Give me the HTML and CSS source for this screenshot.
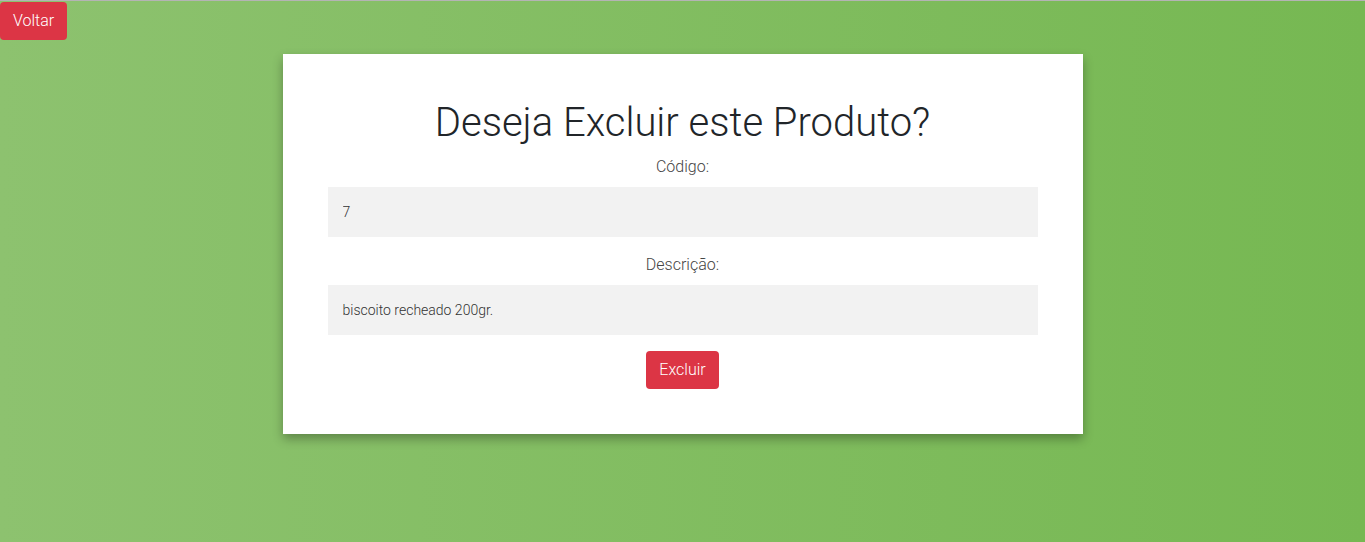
FILE: index.html
```html
<!DOCTYPE html>
<html lang="pt-BR">
<head>
<meta charset="utf-8">
<title>Excluir Produto</title>
<link rel="stylesheet" href="styles.css">
</head>
<body>
<div class="page">
  <div class="topbar">
    <button class="btn btn-danger btn-back" type="button">Voltar</button>
  </div>
  <div class="card">
    <h1 class="title">Deseja Excluir este Produto?</h1>
    <form class="form">
      <label class="label" for="codigo">Código:</label>
      <input class="field" id="codigo" type="text" value="7" readonly>
      <label class="label" for="descricao">Descrição:</label>
      <input class="field" id="descricao" type="text" value="biscoito recheado 200gr." readonly>
      <div class="actions">
        <button class="btn btn-danger" type="button">Excluir</button>
      </div>
    </form>
  </div>
</div>
</body>
</html>
```

FILE: styles.css
```css
* { box-sizing: border-box; }
html, body { margin: 0; padding: 0; height: 100%; }
body {
  font-family: Roboto, "Liberation Sans", sans-serif;
  font-weight: 300;
  color: #212529;
  background: linear-gradient(to left, #76b852, #8dc26f);
  border-top: 1px solid #b4b4b4;
  overflow: hidden;
}
.page {
  display: flex;
  flex-direction: column;
  align-items: center;
}
.topbar {
  align-self: stretch;
  padding-top: 1px;
}
.btn {
  font-family: Roboto, "Liberation Sans", sans-serif;
  font-weight: 300;
  font-size: 16px;
  line-height: 24px;
  padding: 7px 13px;
  border: none;
  border-radius: 4px;
  cursor: pointer;
}
.btn-danger { background: #dc3545; color: #fff; }
.card {
  width: 800px;
  margin-top: 14px;
  background: #fff;
  padding: 45px 45px 45px;
  box-shadow: 0 5px 10px rgba(0, 0, 0, 0.3);
  text-align: center;
}
.title {
  font-size: 40px;
  font-weight: 300;
  line-height: 48px;
  margin: 0 0 8px;
  color: #212529;
}
.form { display: flex; flex-direction: column; }
.label {
  font-size: 16px;
  line-height: 24px;
  color: #444;
  margin-bottom: 8px;
}
.field {
  height: 50px;
  background: #f2f2f2;
  border: none;
  padding: 0 15px;
  font-family: Roboto, "Liberation Sans", sans-serif;
  font-weight: 300;
  font-size: 14px;
  color: #333;
  margin-bottom: 16px;
  outline: none;
}
.actions { display: flex; justify-content: center; padding-top: 0; }
```
